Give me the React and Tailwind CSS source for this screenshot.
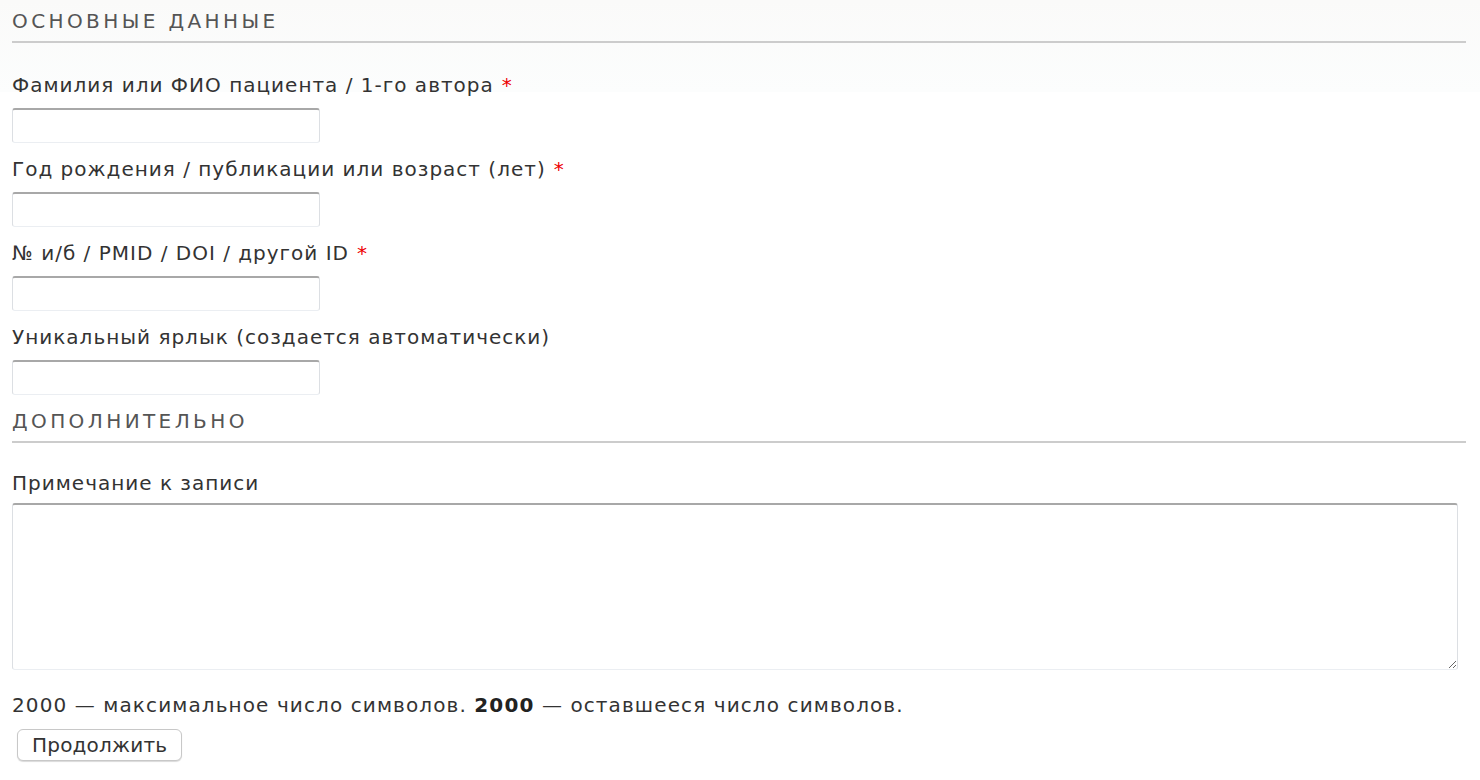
import React from "react";

function Field({ label, required }) {
  return (
    <div className="flex flex-col">
      <label className="text-[20px] leading-[24px] tracking-[1px] text-[#333] h-[24px]">
        {label}
        {required && <span className="text-[#e00] ml-[8px]">*</span>}
      </label>
      <input
        type="text"
        className="mt-[11px] w-[308px] h-[35px] rounded-[3px] bg-white border border-t-2 border-[#dcdfe3] border-t-[#a8a8a8] border-b-[#ebeef2] outline-none"
      />
    </div>
  );
}

export default function App() {
  return (
    <div
      className="w-[1480px] h-[780px] bg-white text-[#333] overflow-hidden"
      style={{ fontFamily: '"DejaVu Sans", Verdana, sans-serif' }}
    >
      <div className="bg-gradient-to-b from-[#fafaf9] to-[#fcfdfd] pt-[8px] h-[92px]">
        <div className="mx-[12px] mr-[14px]">
          <h2 className="text-[20px] leading-[26px] tracking-[3.4px] text-[#555] pb-[7px] border-b-2 border-[#cccccc]">
            ОСНОВНЫЕ ДАННЫЕ
          </h2>
        </div>
      </div>
      <div className="px-[12px] mt-[-19px] flex flex-col gap-[14px]">
        <Field label="Фамилия или ФИО пациента / 1-го автора" required />
        <Field label="Год рождения / публикации или возраст (лет)" required />
        <Field label="№ и/б / PMID / DOI / другой ID" required />
        <Field label="Уникальный ярлык (создается автоматически)" />
      </div>
      <div className="mx-[12px] mr-[14px] mt-[13px]">
        <h2 className="text-[20px] leading-[26px] tracking-[3.4px] text-[#555] pb-[7px] border-b-2 border-[#cccccc]">
          ДОПОЛНИТЕЛЬНО
        </h2>
      </div>
      <div className="px-[12px] mt-[28px]">
        <label className="block text-[20px] leading-[24px] tracking-[1px] text-[#333]">
          Примечание к записи
        </label>
        <textarea className="block mt-[8px] w-[1446px] h-[167px] rounded-[3px] bg-white border border-t-2 border-[#dcdfe3] border-t-[#a8a8a8] border-b-[#ebeef2] outline-none resize-y" />
        <p className="mt-[23px] text-[20px] leading-[24px] tracking-[1.1px] text-[#333]">
          2000 — максимальное число символов. <strong className="font-bold text-[#222]">2000</strong> — оставшееся число символов.
        </p>
        <button className="mt-[12px] ml-[5px] h-[32px] px-[14px] rounded-[6px] bg-white border border-[#c8c8c8] shadow-[0_1px_1px_rgba(0,0,0,0.15)] text-[20px] leading-[24px] tracking-[0.2px] text-[#333]">
          Продолжить
        </button>
      </div>
    </div>
  );
}
